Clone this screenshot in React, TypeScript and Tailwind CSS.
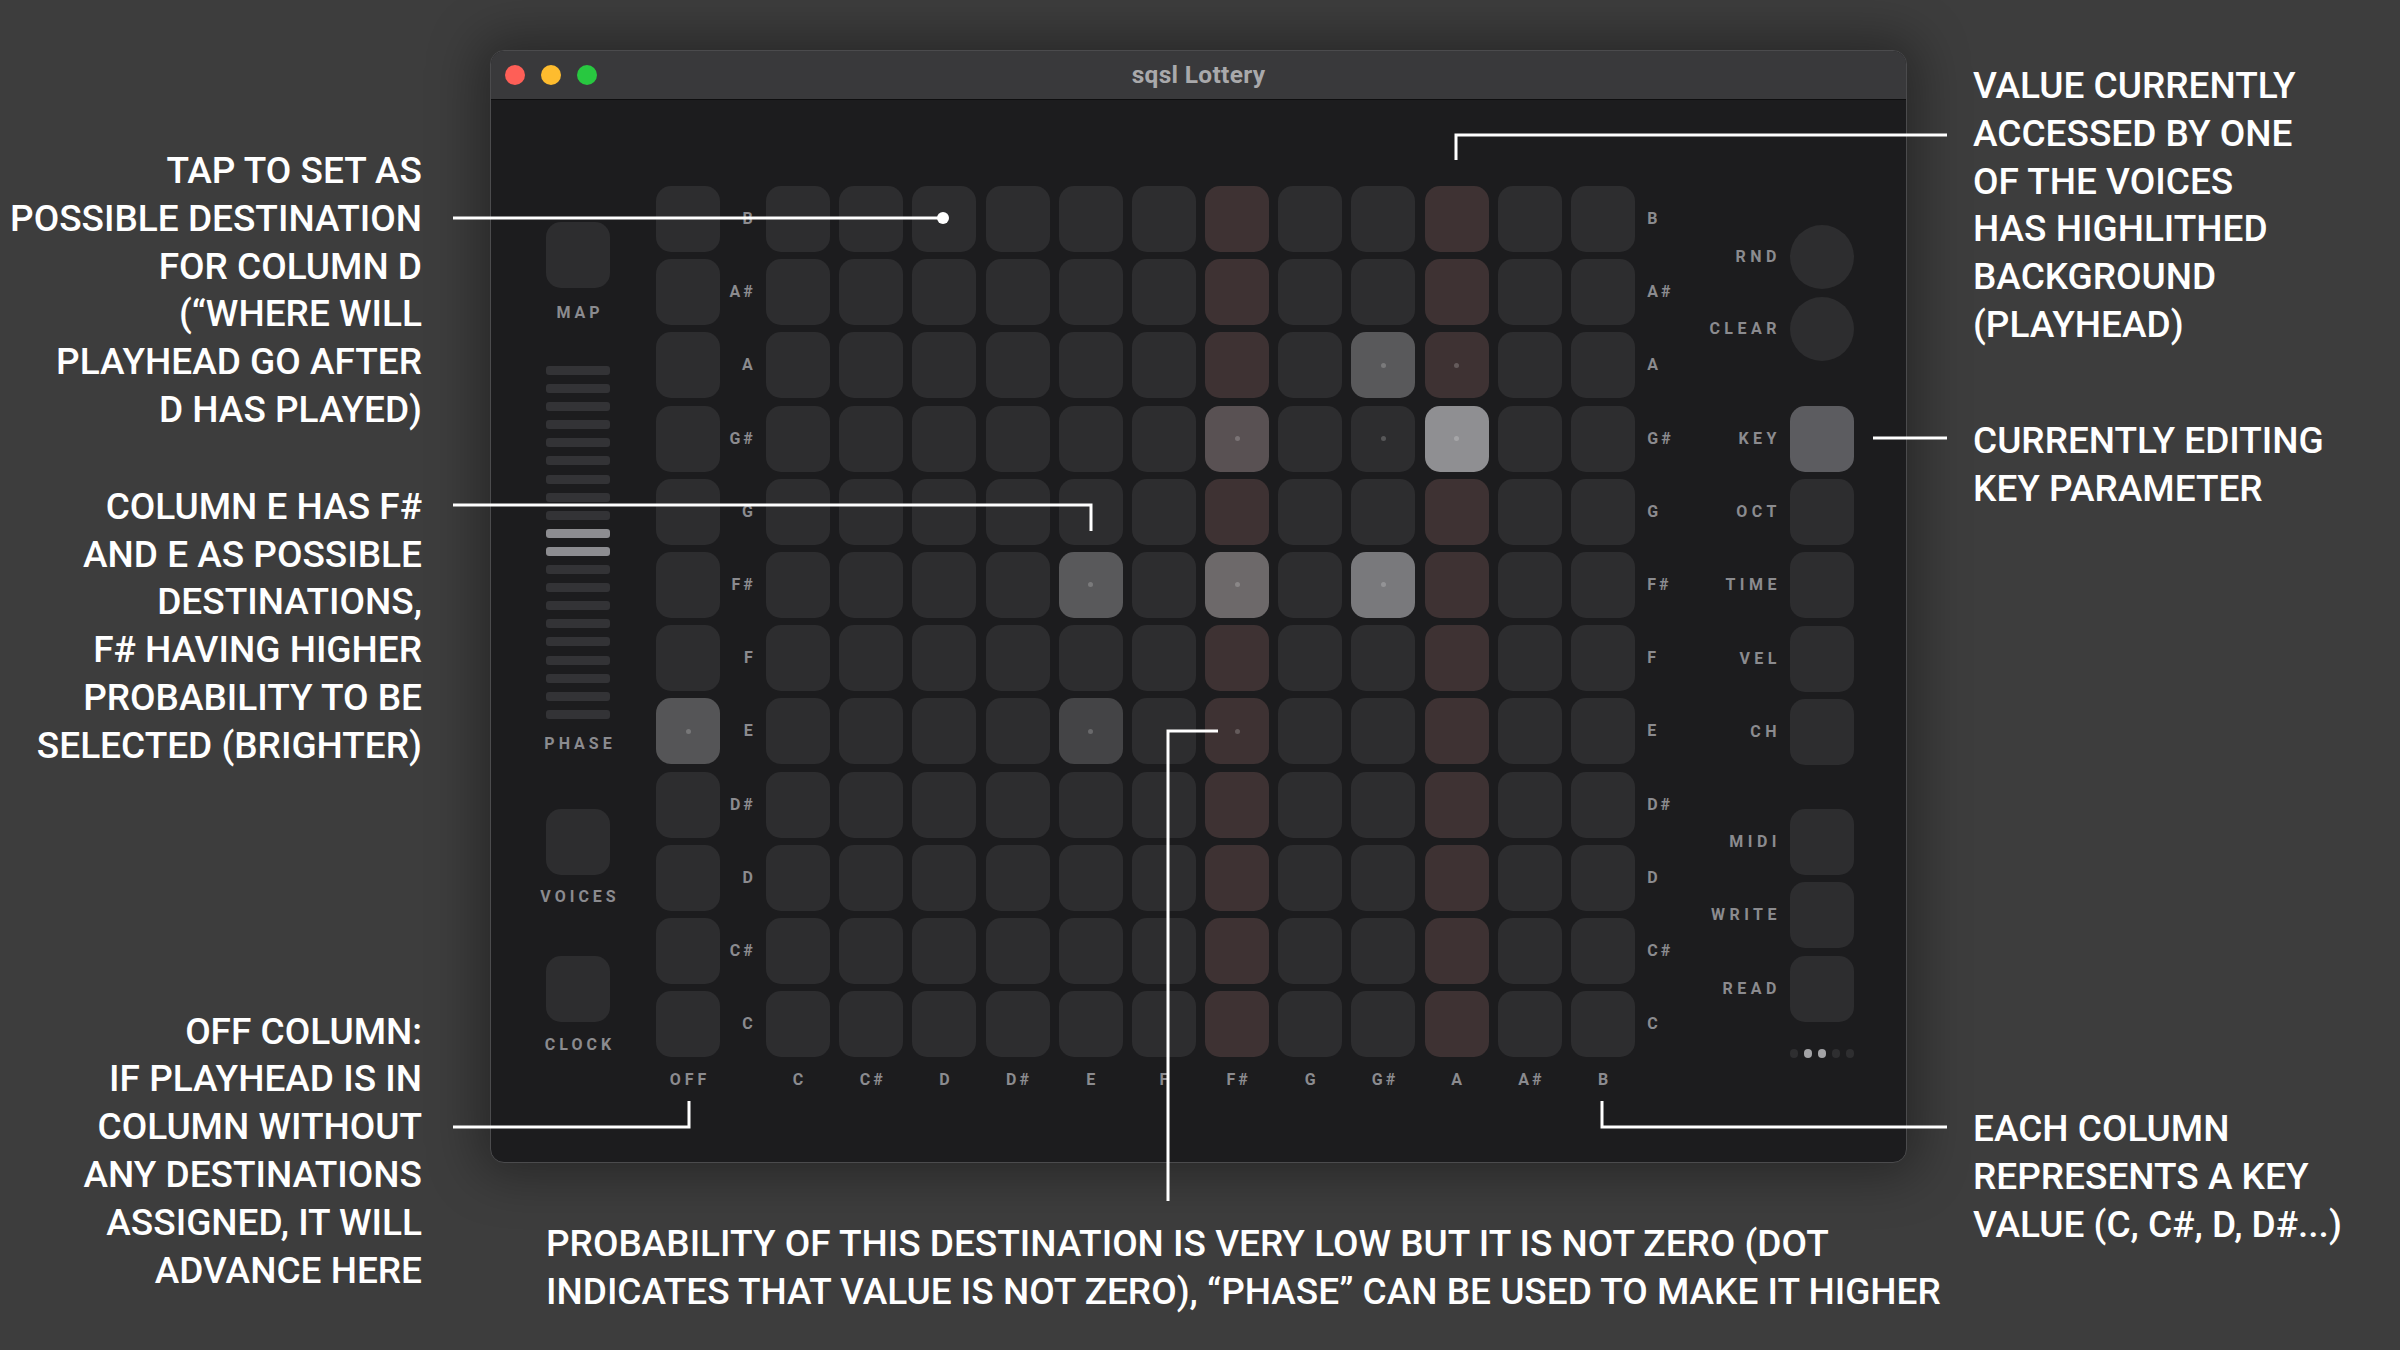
import React from "react";

const ROWS = ["B", "A#", "A", "G#", "G", "F#", "F", "E", "D#", "D", "C#", "C"];
const COLS = ["C", "C#", "D", "D#", "E", "F", "F#", "G", "G#", "A", "A#", "B"];

// columns currently read by a voice (playhead)
const PLAYHEAD = ["F#", "A"];

// lit destinations, keyed "column:row"
const LIT: Record<string, { bg: string; dot: boolean }> = {
  "E:F#": { bg: "bg-[#59595b]", dot: true },
  "E:E": { bg: "bg-[#444446]", dot: true },
  "F#:G#": { bg: "bg-[#595153]", dot: true },
  "F#:F#": { bg: "bg-[#6d696a]", dot: true },
  "F#:E": { bg: "bg-[#3e3233]", dot: true },
  "G#:A": { bg: "bg-[#59595b]", dot: true },
  "G#:G#": { bg: "bg-[#2d2d2f]", dot: true },
  "G#:F#": { bg: "bg-[#79797c]", dot: true },
  "A:A": { bg: "bg-[#3e3233]", dot: true },
  "A:G#": { bg: "bg-[#8f8f92]", dot: true },
};

const label = "font-bold text-[16px] text-[#8b8b8f] uppercase leading-none";

function Cell({ bg, dot }: { bg: string; dot?: boolean }) {
  return (
    <div className={`w-[64px] h-[66px] rounded-[15px] flex items-center justify-center ${bg}`}>
      {dot && <div className="w-[5px] h-[5px] rounded-full bg-white/20" />}
    </div>
  );
}

function Pad({ bright }: { bright?: boolean }) {
  return (
    <div
      className={`w-[64px] h-[66px] rounded-[15px] ${bright ? "bg-[#5c5c60]" : "bg-[#2d2d2f]"}`}
    />
  );
}

function SideLabel({ text }: { text: string }) {
  return <div className={`${label} tracking-[4px] pl-[4px] whitespace-nowrap`}>{text}</div>;
}

function PanelRow({
  text,
  round,
  bright,
  className,
}: {
  text: string;
  round?: boolean;
  bright?: boolean;
  className?: string;
}) {
  return (
    <div className={`flex items-center gap-[9px] ${className ?? ""}`}>
      <div className={`${label} tracking-[4.5px]`}>{text}</div>
      {round ? (
        <div className="w-[64px] h-[64px] rounded-full bg-[#2d2d2f]" />
      ) : (
        <Pad bright={bright} />
      )}
    </div>
  );
}

function Grid() {
  return (
    <div className="grid grid-cols-[64px_27.6px_repeat(12,64px)_40px] grid-rows-[repeat(12,66px)_32px] gap-x-[9.2px] gap-y-[7.2px]">
      {ROWS.map((row) => (
        <React.Fragment key={row}>
          <Cell
            bg={row === "E" ? "bg-[#555557]" : "bg-[#2d2d2f]"}
            dot={row === "E"}
          />
          <div className={`${label} tracking-[3px] flex items-center justify-end pr-[1px]`}>
            {row}
          </div>
          {COLS.map((col) => {
            const lit = LIT[`${col}:${row}`];
            const base = PLAYHEAD.includes(col) ? "bg-[#3e3233]" : "bg-[#2d2d2f]";
            return <Cell key={col} bg={lit ? lit.bg : base} dot={lit?.dot} />;
          })}
          <div className={`${label} tracking-[3px] flex items-center pl-[3px]`}>{row}</div>
        </React.Fragment>
      ))}
      <div className={`${label} tracking-[4px] pl-[4px] flex items-center justify-center`}>OFF</div>
      <div />
      {COLS.map((col) => (
        <div
          key={col}
          className={`${label} tracking-[3px] pl-[3px] flex items-center justify-center`}
        >
          {col}
        </div>
      ))}
      <div />
    </div>
  );
}

function Window() {
  return (
    <div className="w-[1417px] h-[1113px] rounded-[14px] border border-[#4b4b4d] overflow-hidden flex flex-col bg-[#1c1c1e] shadow-[0_0_50px_12px_rgba(0,0,0,0.35)]">
      <div className="h-[49px] shrink-0 grid grid-cols-[1fr_auto_1fr] items-center bg-[#39393b] border-b border-[#0e0e0f]">
        <div className="flex items-center gap-[16px] pl-[14px]">
          <div className="w-[20px] h-[20px] rounded-full bg-[#fe5f57]" />
          <div className="w-[20px] h-[20px] rounded-full bg-[#febc2e]" />
          <div className="w-[20px] h-[20px] rounded-full bg-[#28c840]" />
        </div>
        <div className="text-[24.5px] font-bold tracking-[0.3px] text-[#a9a9ab]">sqsl Lottery</div>
        <div />
      </div>

      <div className="flex-1 flex items-start">
        {/* left sidebar */}
        <div className="ml-[55px] w-[64px] mt-[122px] flex flex-col items-center">
          <Pad />
          <div className="mt-[17px]">
            <SideLabel text="MAP" />
          </div>
          <div className="mt-[45px] flex flex-col gap-[9.1px]">
            {Array.from({ length: 20 }).map((_, i) => (
              <div
                key={i}
                className={`w-[64px] h-[9px] rounded-[3px] ${
                  i === 9 || i === 10 ? "bg-[#8d8d91]" : "bg-[#333336]"
                }`}
              />
            ))}
          </div>
          <div className="mt-[17px]">
            <SideLabel text="PHASE" />
          </div>
          <div className="mt-[57px]">
            <Pad />
          </div>
          <div className="mt-[14px]">
            <SideLabel text="VOICES" />
          </div>
          <div className="mt-[51px]">
            <Pad />
          </div>
          <div className="mt-[15px]">
            <SideLabel text="CLOCK" />
          </div>
        </div>

        {/* matrix */}
        <div className="ml-[46px] mt-[86px]">
          <Grid />
        </div>

        {/* right panel */}
        <div className="ml-auto mr-[52px] mt-[125px] flex flex-col items-end">
          <PanelRow text="RND" round />
          <PanelRow text="CLEAR" round className="mt-[8px]" />
          <PanelRow text="KEY" bright className="mt-[45px]" />
          <PanelRow text="OCT" className="mt-[7.2px]" />
          <PanelRow text="TIME" className="mt-[7.2px]" />
          <PanelRow text="VEL" className="mt-[7.2px]" />
          <PanelRow text="CH" className="mt-[7.2px]" />
          <PanelRow text="MIDI" className="mt-[44px]" />
          <PanelRow text="WRITE" className="mt-[7.5px]" />
          <PanelRow text="READ" className="mt-[7.5px]" />
          <div className="mt-[27px] w-[64px] flex justify-center gap-[6px]">
            <div className="w-[9px] h-[9px] rounded-full bg-[#2e2e30]" />
            <div className="w-[9px] h-[9px] rounded-full bg-[#a3a3a6]" />
            <div className="w-[9px] h-[9px] rounded-full bg-[#a3a3a6]" />
            <div className="w-[9px] h-[9px] rounded-full bg-[#2e2e30]" />
            <div className="w-[9px] h-[9px] rounded-full bg-[#2e2e30]" />
          </div>
        </div>
      </div>
    </div>
  );
}

const note = "text-[37px] leading-[47.8px] font-medium text-white uppercase whitespace-nowrap";

export default function App() {
  return (
    <div className="relative w-[2400px] h-[1350px] overflow-hidden bg-[#3d3d3d] flex items-start font-['Roboto','Liberation_Sans',sans-serif]">
      {/* left notes */}
      <div className="w-[422px] shrink-0 pt-[147px] flex flex-col items-end text-right">
        <p className={note}>
          Tap to set as
          <br />
          possible destination
          <br />
          for column D
          <br />
          (“where will
          <br />
          playhead go after
          <br />D has played)
        </p>
        <p className={`${note} mt-[49px]`}>
          Column E has F#
          <br />
          and E as possible
          <br />
          destinations,
          <br />
          F# having higher
          <br />
          probability to be
          <br />
          selected (brighter)
        </p>
        <p className={`${note} mt-[238px]`}>
          Off column:
          <br />
          if playhead is in
          <br />
          column without
          <br />
          any destinations
          <br />
          assigned, it will
          <br />
          advance here
        </p>
      </div>

      {/* window + bottom note */}
      <div className="ml-[68px] w-[1417px] shrink-0 pt-[50px]">
        <Window />
        <p className={`${note} mt-[57px] pl-[56px]`}>
          Probability of this destination is very low but it is not zero (dot
          <br />
          indicates that value is not zero), “phase” can be used to make it higher
        </p>
      </div>

      {/* right notes */}
      <div className="ml-[66px] pt-[62px] flex flex-col">
        <p className={note}>
          Value currently
          <br />
          accessed by one
          <br />
          of the voices
          <br />
          has highlithed
          <br />
          background
          <br />
          (playhead)
        </p>
        <p className={`${note} mt-[68px]`}>
          Currently editing
          <br />
          key parameter
        </p>
        <p className={`${note} mt-[593px]`}>
          Each column
          <br />
          represents a key
          <br />
          value (C, C#, D, D#...)
        </p>
      </div>

      {/* leader lines */}
      <svg
        className="absolute inset-0 pointer-events-none"
        width="2400"
        height="1350"
        viewBox="0 0 2400 1350"
        fill="none"
        stroke="#ffffff"
        strokeWidth="3"
      >
        <polyline points="453,218 943,218" />
        <circle cx="943" cy="218" r="6" fill="#ffffff" stroke="none" />
        <polyline points="453,505 1091,505 1091,531" />
        <polyline points="453,1127 689,1127 689,1101" />
        <polyline points="1218,731 1168,731 1168,1201" />
        <polyline points="1947,135 1456,135 1456,160" />
        <polyline points="1873,438 1947,438" />
        <polyline points="1602,1101 1602,1127 1947,1127" />
      </svg>
    </div>
  );
}
